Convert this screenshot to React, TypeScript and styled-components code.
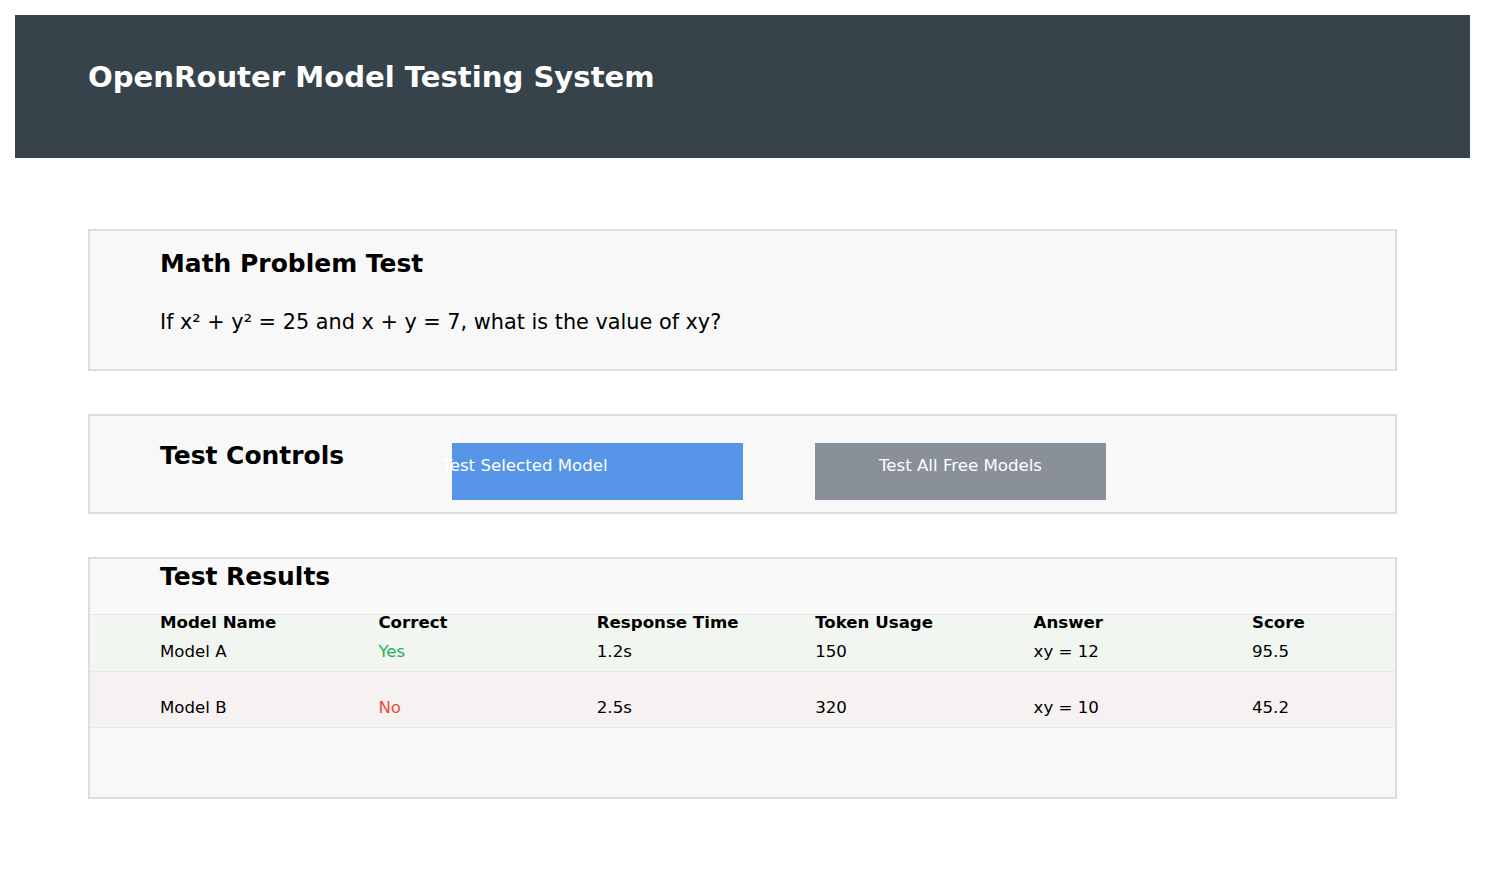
import * as React from "react";
import styled, { createGlobalStyle } from "styled-components";

const GlobalStyle = createGlobalStyle`
  body {
    margin: 15px;
    background: #ffffff;
    font-family: "DejaVu Sans", sans-serif;
    color: #000;
  }
`;

const Header = styled.header`
  background: #37434b;
  height: 143px;
  box-sizing: border-box;
  padding: 44px 73px 0;
`;

const HeaderTitle = styled.h1`
  margin: 0;
  color: #fff;
  font-size: 29.1px;
  line-height: 36px;
  font-weight: bold;
`;

const Main = styled.main`
  padding: 71px 73px 0;
  display: flex;
  flex-direction: column;
  gap: 43px;
`;

const Card = styled.section<{ $pad: string; $height: number }>`
  background: #f8f8f8;
  border: 2px solid #dddddd;
  height: ${(p) => p.$height}px;
  box-sizing: border-box;
  padding: ${(p) => p.$pad};
  overflow: hidden;
`;

const CardTitle = styled.h2`
  margin: 0;
  font-size: 24.96px;
  line-height: 30px;
  font-weight: bold;
`;

const Question = styled.p`
  margin: 31px 0 0;
  font-size: 20.8px;
  line-height: 25px;
`;

const Controls = styled.div`
  display: flex;
  align-items: flex-start;
  gap: 72px;
  padding-left: 70px;
`;

const ControlsTitle = styled(CardTitle)`
  width: 220px;
  flex: none;
  line-height: 26px;
`;

const Button = styled.button<{ $bg: string; $offset?: number }>`
  width: 291px;
  height: 57px;
  flex: none;
  border: none;
  background: ${(p) => p.$bg};
  color: #fff;
  font-family: "DejaVu Sans", sans-serif;
  font-size: 16.64px;
  line-height: 24px;
  display: flex;
  justify-content: center;
  align-items: flex-start;
  padding: 11px ${(p) => p.$offset ?? 0}px 0 0;
  white-space: nowrap;
  cursor: pointer;
`;

const ResultsTitle = styled(CardTitle)`
  padding-left: 70px;
`;

const Table = styled.div`
  margin-top: 21px;
`;

const Grid = styled.div`
  display: grid;
  grid-template-columns: repeat(6, 218.4px);
  padding-left: 70px;
  font-size: 16.64px;
  line-height: 20px;
`;

const HeadRow = styled(Grid)`
  position: relative;
  z-index: 1;
  height: 20px;
  margin-bottom: -19px;
  font-weight: bold;
`;

const Row = styled(Grid)<{ $tone: string }>`
  height: 57px;
  box-sizing: border-box;
  background: ${(p) => p.$tone};
  border-top: 1px solid #e8e8e8;
  align-items: end;
  padding-bottom: 9px;
  &:last-child {
    border-bottom: 1px solid #e8e8e8;
  }
`;

const Cell = styled.div<{ $color?: string }>`
  white-space: nowrap;
  color: ${(p) => p.$color ?? "#000"};
`;

const heads = ["Model Name", "Correct", "Response Time", "Token Usage", "Answer", "Score"];

const results = [
  { name: "Model A", correct: true, time: "1.2s", tokens: "150", answer: "xy = 12", score: "95.5" },
  { name: "Model B", correct: false, time: "2.5s", tokens: "320", answer: "xy = 10", score: "45.2" },
];

const App = () => {
  return (
    <>
      <GlobalStyle />
      <Header>
        <HeaderTitle>OpenRouter Model Testing System</HeaderTitle>
      </Header>
      <Main>
        <Card $pad="18px 70px 0" $height={142}>
          <CardTitle>Math Problem Test</CardTitle>
          <Question>If x² + y² = 25 and x + y = 7, what is the value of xy?</Question>
        </Card>
        <Card $pad="27px 0 0" $height={100}>
          <Controls>
            <ControlsTitle>Test Controls</ControlsTitle>
            <Button $bg="#5795e8" $offset={145}>Test Selected Model</Button>
            <Button $bg="#8a9097">Test All Free Models</Button>
          </Controls>
        </Card>
        <Card $pad="3px 0 0" $height={242}>
          <ResultsTitle>Test Results</ResultsTitle>
          <Table>
            <HeadRow>
              {heads.map((h) => (
                <Cell key={h}>{h}</Cell>
              ))}
            </HeadRow>
            {results.map((r) => (
              <Row key={r.name} $tone={r.correct ? "#f1f6f1" : "#f6f2f1"}>
                <Cell>{r.name}</Cell>
                <Cell $color={r.correct ? "#27ae60" : "#e74c3c"}>{r.correct ? "Yes" : "No"}</Cell>
                <Cell>{r.time}</Cell>
                <Cell>{r.tokens}</Cell>
                <Cell>{r.answer}</Cell>
                <Cell>{r.score}</Cell>
              </Row>
            ))}
          </Table>
        </Card>
      </Main>
    </>
  );
};

export default App;
